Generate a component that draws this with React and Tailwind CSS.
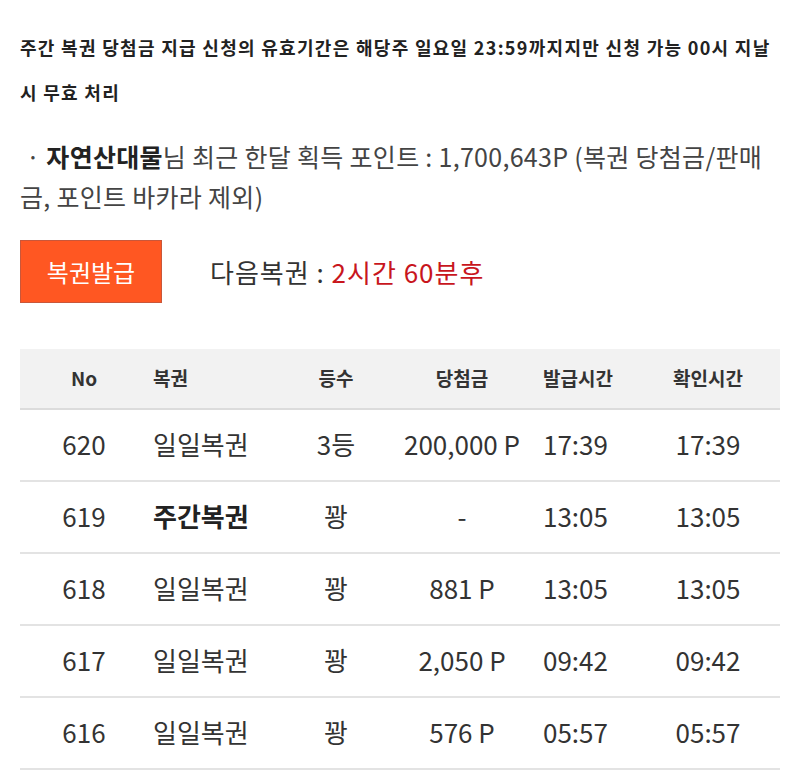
import React from 'react';

const rows = [
  { no: 620, name: '일일복권', rank: '3등', prize: '200,000 P', issued: '17:39', checked: '17:39' },
  { no: 619, name: '주간복권', rank: '꽝', prize: '-', issued: '13:05', checked: '13:05', bold: true },
  { no: 618, name: '일일복권', rank: '꽝', prize: '881 P', issued: '13:05', checked: '13:05' },
  { no: 617, name: '일일복권', rank: '꽝', prize: '2,050 P', issued: '09:42', checked: '09:42' },
  { no: 616, name: '일일복권', rank: '꽝', prize: '576 P', issued: '05:57', checked: '05:57' },
];

const cols = 'grid grid-cols-[128px_140px_96px_156px_110px_1fr] items-center';

export default function App() {
  return (
    <main
      className="w-[800px] min-h-[781px] bg-white px-5 text-[#333]"
      style={{ fontFamily: '"Noto Sans CJK KR", "Noto Sans", sans-serif' }}
    >
      <p className="pt-[25px] text-[18px] font-bold leading-[45px] tracking-[1.3px] text-[#222] whitespace-nowrap">
        주간 복권 당첨금 지급 신청의 유효기간은 해당주 일요일 23:59까지지만 신청 가능 00시 지날
        <br />
        시 무효 처리
      </p>

      <p className="mt-[21px] text-[25px] leading-[40px] tracking-[0.3px] text-[#444] whitespace-nowrap">
        <span className="pl-[6px] pr-[6px]">·</span>
        <strong className="font-bold text-[#222]">자연산대물</strong>님 최근 한달 획득 포인트 : 1,700,643P (복권 당첨금/판매
        <br />
        금, 포인트 바카라 제외)
      </p>

      <div className="mt-[24px] flex items-center gap-[48px]">
        <button className="w-[142px] h-[63px] bg-[#ff5722] border border-[#c9573a] text-white text-[24px]">
          복권발급
        </button>
        <p className="text-[26px] tracking-[1px] text-[#333]">
          다음복권 : <span className="text-[#c8161d]">2시간 60분후</span>
        </p>
      </div>

      <div className="mt-[46px] w-[760px]">
        <div className={`${cols} h-[61px] bg-[#f2f2f2] border-b-2 border-[#dcdcdc] text-[19px] font-bold text-[#333]`}>
          <span className="text-center">No</span>
          <span className="pl-[5px]">복권</span>
          <span className="text-center">등수</span>
          <span className="text-center">당첨금</span>
          <span className="pl-[3px]">발급시간</span>
          <span className="text-center pr-[14px]">확인시간</span>
        </div>
        {rows.map((r) => (
          <div key={r.no} className={`${cols} h-[72px] border-b-2 border-[#e3e3e3] text-[26px] text-[#333]`}>
            <span className="text-center -mt-[4px]">{r.no}</span>
            <span className={`pl-[5px] -mt-[4px] ${r.bold ? 'font-bold text-[#222]' : ''}`}>{r.name}</span>
            <span className="text-center -mt-[4px]">{r.rank}</span>
            <span className="text-center whitespace-nowrap -mt-[4px]">{r.prize}</span>
            <span className="pl-[3px] -mt-[4px]">{r.issued}</span>
            <span className="text-center pr-[14px] -mt-[4px]">{r.checked}</span>
          </div>
        ))}
      </div>
    </main>
  );
}
